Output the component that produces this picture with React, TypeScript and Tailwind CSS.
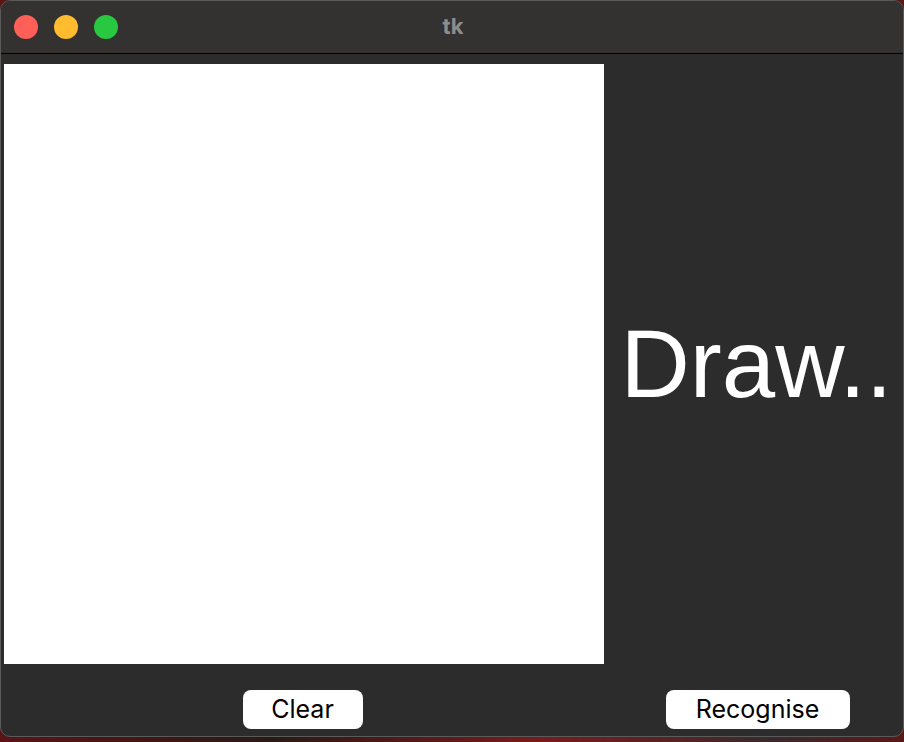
import React from "react";

export default function App() {
  return (
    <div className="w-[904px] h-[742px] overflow-hidden bg-[linear-gradient(90deg,#5a1414_0%,#2a1a14_30%,#7a1a1a_60%,#3a2a2a_85%,#5a1818_100%)]">
      <div className="w-[904px] h-[737px] rounded-[10px] border border-[#5a5a5a] bg-[#2c2c2c] overflow-hidden flex flex-col">
        {/* Title bar */}
        <div className="relative h-[53px] shrink-0 bg-[#333231] border-b border-black flex items-center">
          <div className="flex items-center gap-[16px] pl-[13px]">
            <span className="block w-[24px] h-[24px] rounded-full bg-[#fe5f57]" />
            <span className="block w-[24px] h-[24px] rounded-full bg-[#febc2e]" />
            <span className="block w-[24px] h-[24px] rounded-full bg-[#28c840]" />
          </div>
          <div className="absolute inset-0 flex items-center justify-center pointer-events-none">
            <span
              className="text-[22px] font-bold text-[#8e8d8c] leading-none pl-[2px] pb-[2px]"
              style={{ fontFamily: "Inter, 'Liberation Sans', sans-serif" }}
            >
              tk
            </span>
          </div>
        </div>
        {/* Content */}
        <div className="flex-1 flex flex-col">
          <div className="flex pt-[10px]">
            <div className="ml-[3px] w-[600px] h-[600px] bg-white shrink-0" />
            <div className="flex-1 flex items-center justify-center pl-[6px]">
              <span
                className="text-[96px] leading-none text-white whitespace-nowrap"
                style={{ fontFamily: "'Liberation Sans', Arial, sans-serif" }}
              >
                Draw..
              </span>
            </div>
          </div>
          <div className="flex pt-[26px]">
            <div className="w-[603px] flex justify-center">
              <button
                className="w-[120px] h-[39px] rounded-[8px] bg-white text-black text-[25px] leading-none flex items-center justify-center"
                style={{ fontFamily: "Inter, 'Liberation Sans', sans-serif" }}
              >
                Clear
              </button>
            </div>
            <div className="flex-1 flex justify-center pl-[8px]">
              <button
                className="w-[184px] h-[39px] rounded-[8px] bg-white text-black text-[25px] leading-none flex items-center justify-center"
                style={{ fontFamily: "Inter, 'Liberation Sans', sans-serif" }}
              >
                Recognise
              </button>
            </div>
          </div>
        </div>
      </div>
    </div>
  );
}
